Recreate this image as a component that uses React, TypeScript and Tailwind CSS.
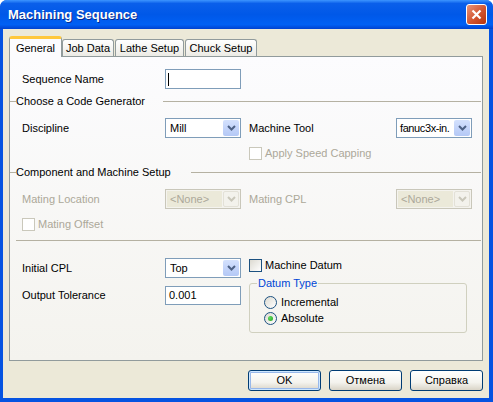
import React from "react";

const font = { fontFamily: '"Liberation Sans", Arial, sans-serif' };

const Chevron = ({ disabled }: { disabled?: boolean }) => (
  <svg width="9" height="6" viewBox="0 0 9 6">
    <path
      d="M1 1 L4.5 4.5 L8 1"
      fill="none"
      stroke={disabled ? "#c9c7ba" : "#4d6185"}
      strokeWidth="2"
    />
  </svg>
);

const Select = ({
  value,
  disabled,
  tight,
}: {
  value: string;
  disabled?: boolean;
  tight?: boolean;
}) => (
  <div
    className={`flex h-[20px] w-[76px] items-stretch border p-px ${
      disabled ? "border-[#c9c7ba] bg-[#f4f3ee]" : "border-[#7f9db9] bg-white"
    }`}
  >
    <div
      className={`flex flex-1 items-center overflow-hidden whitespace-nowrap ${
        tight ? "pl-[2px] tracking-[-0.4px]" : "pl-[3px]"
      } ${disabled ? "bg-[#ebe9d9] text-[#aca899]" : "text-black"}`}
    >
      {value}
    </div>
    <div
      className={`ml-px flex w-[16px] items-center justify-center rounded-[2px] ${
        disabled
          ? "border border-[#e3e1d7] bg-[#f3f2ec]"
          : "bg-[linear-gradient(to_bottom,#d4e1fd,#b4c8f6)]"
      }`}
    >
      <Chevron disabled={disabled} />
    </div>
  </div>
);

const Checkbox = ({ label, disabled }: { label: string; disabled?: boolean }) => (
  <div className="flex h-[13px] items-center">
    <span
      className={`h-[13px] w-[13px] border ${
        disabled
          ? "border-[#cac8bb] bg-white"
          : "border-[#1c5180] bg-[linear-gradient(135deg,#dcdad1,#ffffff)]"
      }`}
    />
    <span className={`ml-[3px] ${disabled ? "text-[#aca899]" : "text-black"}`}>
      {label}
    </span>
  </div>
);

const Radio = ({ label, checked }: { label: string; checked?: boolean }) => (
  <div className="flex h-[13px] items-center">
    <span className="flex h-[13px] w-[13px] items-center justify-center rounded-full border border-[#1c5180] bg-[linear-gradient(135deg,#dcdad1,#ffffff)]">
      {checked && (
        <span className="h-[5px] w-[5px] rounded-full bg-[radial-gradient(circle_at_35%_35%,#5fdc5b,#21a121)]" />
      )}
    </span>
    <span className="ml-[4px]">{label}</span>
  </div>
);

const GroupHeader = ({ title, gap }: { title: string; gap: string }) => (
  <div className="-ml-[6px] flex h-[13px] items-center">
    <span className="h-px w-[6px] bg-[#b5b1a2]" />
    <span>{title}</span>
    <span className={`h-px flex-1 bg-[#b5b1a2] ${gap}`} />
  </div>
);

const Button = ({ label, isDefault }: { label: string; isDefault?: boolean }) => (
  <button
    className={`flex h-[21px] w-[73px] items-center justify-center rounded-[3px] border border-[#003c74] bg-[linear-gradient(to_bottom,#ffffff,#f4f3ee_60%,#d9d4c7)] text-black ${
      isDefault ? "shadow-[inset_0_0_0_1px_#cee7ff,inset_0_0_0_2px_#98b8ea]" : ""
    }`}
  >
    {label}
  </button>
);

export default function App() {
  return (
    <div className="h-[402px] w-[493px] bg-white text-[11px] leading-[13px]" style={font}>
      <div className="flex h-full flex-col rounded-t-[7px] bg-[#0553e1]">
        <div className="flex h-[29px] items-center rounded-t-[7px] bg-[linear-gradient(to_bottom,#3d95ff,#0a5fea_12%,#0058e8_50%,#0060f4_85%,#0041cf)] pl-[8px] pr-[6px]">
          <span className="text-[13px] font-bold text-white [text-shadow:1px_1px_0_#0a2a8a]">
            Machining Sequence
          </span>
          <button className="ml-auto flex h-[21px] w-[21px] items-center justify-center rounded-[3px] border border-white bg-[linear-gradient(135deg,#e8957a,#d2542f_55%,#b8330c)]">
            <svg width="11" height="11" viewBox="0 0 11 11">
              <path d="M1.5 1.5 L9.5 9.5 M9.5 1.5 L1.5 9.5" stroke="#fff" strokeWidth="2.2" />
            </svg>
          </button>
        </div>

        <div className="mb-[4px] ml-[3px] mr-[4px] flex flex-1 flex-col bg-[#ece9d8] pl-[6px] pt-[7px]">
          {/* tabs */}
          <div className="flex h-[20px] items-end">
            <div className="relative z-10 -mb-px flex h-[21px] w-[53px] justify-center rounded-t-[3px] border-x border-[#919b9c] border-t-[3px] border-t-[#ffc83c] bg-[#fcfcfe] pt-[3px]">
              General
            </div>
            {[
              ["Job Data", "w-[52px]"],
              ["Lathe Setup", "w-[69px]"],
              ["Chuck Setup", "w-[72px]"],
            ].map(([t, w]) => (
              <div
                key={t}
                className={`mr-px flex h-[17px] ${w} justify-center rounded-t-[3px] border-x border-t border-[#919b9c] bg-[linear-gradient(to_bottom,#ffffff,#ecebe5)] pt-[2px]`}
              >
                {t}
              </div>
            ))}
          </div>

          {/* panel */}
          <div className="flex h-[305px] w-[474px] flex-col border border-[#919b9c] bg-[linear-gradient(to_bottom,#fcfcfe,#f4f3ee)] pl-[6px] pr-[1px] pt-[12px]">
            <div className="flex h-[20px] items-center pl-[6px]">
              <span className="w-[143px]">Sequence Name</span>
              <div className="flex h-[20px] w-[76px] items-center border border-[#7f9db9] bg-white pl-[2px]">
                <span className="h-[13px] w-px bg-black" />
              </div>
            </div>

            <div className="mt-[6px]">
              <GroupHeader title="Choose a Code Generator" gap="ml-[18px]" />
            </div>

            <div className="mt-[10px] flex h-[20px] items-center pl-[6px]">
              <span className="w-[143px]">Discipline</span>
              <Select value="Mill" />
              <span className="ml-[8px] w-[147px]">Machine Tool</span>
              <Select value="fanuc3x-in." tight />
            </div>

            <div className="mt-[9px] flex pl-[233px]">
              <Checkbox label="Apply Speed Capping" disabled />
            </div>

            <div className="mt-[6px]">
              <GroupHeader title="Component and Machine Setup" gap="ml-[20px]" />
            </div>

            <div className="mt-[10px] flex h-[20px] items-center pl-[6px] text-[#aca899]">
              <span className="w-[143px]">Mating Location</span>
              <Select value="<None>" disabled />
              <span className="ml-[8px] w-[147px]">Mating CPL</span>
              <Select value="<None>" disabled />
            </div>

            <div className="mt-[9px] flex pl-[6px]">
              <Checkbox label="Mating Offset" disabled />
            </div>

            <div className="mt-[9px] h-px bg-[#b5b1a2]" />

            <div className="mt-[17px] flex pl-[6px]">
              <div className="flex w-[227px] flex-col">
                <div className="flex h-[20px] items-center">
                  <span className="w-[143px]">Initial CPL</span>
                  <Select value="Top" />
                </div>
                <div className="mt-[8px] flex h-[19px] items-center">
                  <span className="w-[143px]">Output Tolerance</span>
                  <div className="flex h-[19px] w-[76px] items-center border border-[#7f9db9] bg-white pl-[3px]">
                    0.001
                  </div>
                </div>
              </div>
              <div className="flex flex-col pt-px">
                <Checkbox label="Machine Datum" />
                <fieldset className="mt-[5px] w-[218px] rounded-[3px] border border-[#d0d0bf] pb-[7px] pl-[7px]">
                  <legend className="px-px text-[#0046d5]">Datum Type</legend>
                  <div className="flex flex-col gap-[3px] pl-[7px] pt-[6px]">
                    <Radio label="Incremental" />
                    <Radio label="Absolute" checked />
                  </div>
                </fieldset>
              </div>
            </div>
          </div>

          {/* buttons */}
          <div className="mt-[9px] flex w-[474px] justify-end gap-[8px]">
            <Button label="OK" isDefault />
            <Button label="Отмена" />
            <Button label="Справка" />
          </div>
        </div>
      </div>
    </div>
  );
}
